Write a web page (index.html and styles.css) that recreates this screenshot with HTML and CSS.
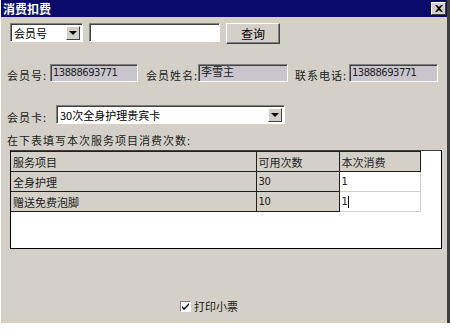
FILE: index.html
```html
<!DOCTYPE html>
<html lang="zh-CN">
<head>
    <meta charset="UTF-8">
    <title>消费扣费</title>
    <link rel="stylesheet" href="styles.css">
</head>
<body>

    <div class="window">

        <div class="titlebar">
            <span class="title">消费扣费</span>
            <span class="close-btn">
                <svg width="8" height="7" viewBox="0 0 8 7"><path d="M0 0h2l2 2 2-2h2L5 3.5 8 7H6L4 5 2 7H0l3-3.5z" fill="#000"/></svg>
            </span>
        </div>

        <div class="content">

            <!-- search row -->
            <div class="search-row">
                <div class="combo small">
                    <span class="combo-text">会员号</span>
                    <span class="combo-btn"><i class="arrow"></i></span>
                </div>
                <div class="field search-field"></div>
                <button class="btn">查询</button>
            </div>

            <!-- member info -->
            <div class="info-row">
                <label class="lbl lbl-no">会员号:</label>
                <div class="field readonly w-no">13888693771</div>
                <label class="lbl lbl-name">会员姓名:</label>
                <div class="field readonly w-name cjk">李雪主</div>
                <label class="lbl lbl-tel">联系电话:</label>
                <div class="field readonly w-tel">13888693771</div>
            </div>

            <div class="card-row">
                <label class="lbl lbl-card">会员卡:</label>
                <div class="combo wide">
                    <span class="combo-text">30次全身护理贵宾卡</span>
                    <span class="combo-btn"><i class="arrow"></i></span>
                </div>
            </div>

            <p class="hint">在下表填写本次服务项目消费次数:</p>

            <div class="grid-box">
                <table class="grid">
                    <tr class="head">
                        <td class="c1">服务项目</td>
                        <td class="c2">可用次数</td>
                        <td class="c3">本次消费</td>
                    </tr>
                    <tr>
                        <td class="c1">全身护理</td>
                        <td class="c2 num">30</td>
                        <td class="c3 edit num">1</td>
                    </tr>
                    <tr>
                        <td class="c1">赠送免费泡脚</td>
                        <td class="c2 num">10</td>
                        <td class="c3 edit num">1<span class="caret"></span></td>
                    </tr>
                </table>
            </div>

            <div class="print-row">
                <span class="checkbox">
                    <svg width="7" height="7" viewBox="0 0 7 7"><path d="M0 3l2 2 5-5v2L2 7 0 5z" fill="#000"/></svg>
                </span>
                <span class="print-text">打印小票</span>
            </div>

        </div>
    </div>

</body>
</html>
```

FILE: styles.css
```css
* {
    margin: 0;
    padding: 0;
    box-sizing: border-box;
}

body {
    background-color: #ffffff;
    font-family: "Noto Sans CJK SC", "Liberation Sans", sans-serif;
    font-size: 12px;
    color: #000000;
}

.window {
    width: 450px;
    height: 323px;
    background-color: #d4d0c8;
    border-left: 1px solid #ffffff;
    border-right: 3px solid #404040;
}

.titlebar {
    height: 17px;
    background-color: #0a0a6a;
    display: flex;
    align-items: center;
    justify-content: space-between;
    padding: 0 1px 0 2px;
}

.title {
    color: #ffffff;
    font-weight: bold;
    font-size: 12px;
    line-height: 17px;
}

.close-btn {
    width: 15px;
    height: 13px;
    background-color: #d4d0c8;
    border: 1px solid;
    border-color: #ffffff #404040 #404040 #ffffff;
    display: flex;
    align-items: center;
    justify-content: center;
}

.content {
    padding: 6px 0 0 6px;
}

/* sunken edit field */
.field {
    height: 19px;
    background-color: #ffffff;
    border: 1px solid;
    border-color: #808080 #ffffff #ffffff #808080;
    box-shadow: inset 1px 1px 0 #404040;
    font-family: "DejaVu Sans", sans-serif;
    font-size: 10px;
    letter-spacing: -0.5px;
    color: #202020;
    padding: 1px 0 0 2px;
    line-height: 14px;
    white-space: nowrap;
    overflow: hidden;
}

.field.readonly {
    background-color: #c9c5cd;
    height: 18px;
}

.field.cjk {
    font-family: "Noto Sans CJK SC", sans-serif;
    font-size: 11px;
    letter-spacing: 0;
    line-height: 12px;
    padding-top: 0;
}

.search-row {
    display: flex;
    align-items: flex-start;
    margin-left: 3px;
    height: 21px;
}

.combo {
    height: 19px;
    background-color: #ffffff;
    border: 1px solid;
    border-color: #808080 #ffffff #ffffff #808080;
    box-shadow: inset 1px 1px 0 #404040;
    display: flex;
    align-items: stretch;
    padding: 2px 2px 1px 2px;
}

.combo.small {
    width: 73px;
}

.combo.wide {
    width: 229px;
}

.combo-text {
    flex: 1;
    font-size: 11px;
    line-height: 14px;
    padding-left: 1px;
    white-space: nowrap;
    overflow: hidden;
}

.combo-btn {
    width: 14px;
    background-color: #d4d0c8;
    border: 1px solid;
    border-color: #ffffff #404040 #404040 #ffffff;
    display: flex;
    align-items: center;
    justify-content: center;
}

.arrow {
    width: 0;
    height: 0;
    border-left: 4px solid transparent;
    border-right: 4px solid transparent;
    border-top: 4px solid #000000;
}

.search-field {
    width: 131px;
    margin-left: 6px;
}

.btn {
    width: 54px;
    height: 21px;
    margin-left: 6px;
    background-color: #d4d0c8;
    border: 1px solid;
    border-color: #ffffff #404040 #404040 #ffffff;
    box-shadow: inset -1px -1px 0 #808080;
    font-family: "Noto Sans CJK SC", sans-serif;
    font-size: 12px;
    color: #000000;
}

.info-row {
    display: flex;
    align-items: center;
    margin-top: 20px;
    height: 18px;
}

.lbl {
    font-size: 11px;
    letter-spacing: 1px;
    color: #202020;
    white-space: nowrap;
    padding-top: 4px;
}

.lbl-no { width: 43px; }
.lbl-name { width: 52px; margin-left: 8px; }
.lbl-tel { width: 54px; margin-left: 7px; }
.lbl-card { width: 49px; }

.w-no { width: 88px; }
.w-name { width: 90px; }
.w-tel { width: 89px; }

.card-row {
    display: flex;
    align-items: center;
    margin-top: 23px;
    height: 19px;
}

.hint {
    margin-top: 8px;
    font-size: 11px;
    letter-spacing: 1px;
    color: #202020;
    line-height: 16px;
}

.grid-box {
    margin: 2px 0 0 3px;
    width: 432px;
    height: 99px;
    background-color: #ffffff;
    border: 1px solid #000000;
    border-top-color: #404040;
}

.grid {
    border-collapse: collapse;
    font-size: 11px;
    color: #202020;
}

.grid td {
    height: 20px;
    padding: 0 2px;
    border: 1px solid #202020;
    border-left: none;
    background-color: #d4d0c8;
    white-space: nowrap;
}

.grid .c1 { width: 245px; }
.grid .c2 { width: 83px; }
.grid .c3 { width: 81px; }

.grid td.edit {
    background-color: #ffffff;
    border-right-color: #d0d0d0;
    border-bottom-color: #d0d0d0;
}

.grid td.num {
    font-family: "DejaVu Sans", sans-serif;
    font-size: 10px;
    letter-spacing: -0.4px;
}

.caret {
    display: inline-block;
    width: 1px;
    height: 12px;
    background-color: #000000;
    vertical-align: middle;
    margin-left: 1px;
}

.print-row {
    display: flex;
    align-items: center;
    margin: 49px 0 0 173px;
}

.checkbox {
    width: 11px;
    height: 11px;
    background-color: #ffffff;
    border: 1px solid;
    border-color: #808080 #ffffff #ffffff #808080;
    display: flex;
    align-items: center;
    justify-content: center;
}

.print-text {
    margin-left: 3px;
    font-size: 11px;
    color: #202020;
}
```
